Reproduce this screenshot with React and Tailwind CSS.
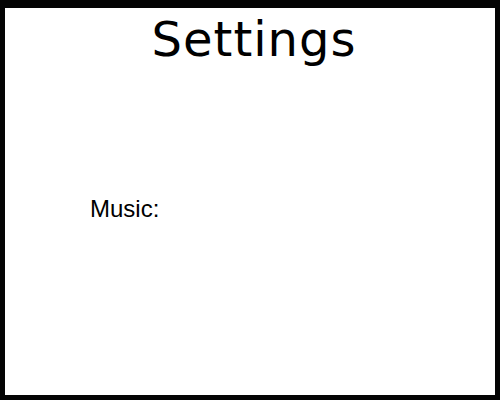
export default function App() {
  return (
    <div className="w-[500px] h-[400px] bg-[#040404] pt-[8px] pl-[5px]">
      <div className="w-[490px] h-[387px] bg-white relative">
        <h1 className="text-center text-[48px] leading-none tracking-[1px] pt-[7px] pl-[8px] text-black font-['DejaVu_Sans',sans-serif]">
          Settings
        </h1>
        <div className="mt-[134px] ml-[85px] text-[24px] leading-none text-black font-['Liberation_Sans',Arial,sans-serif]">
          Music:
        </div>
      </div>
    </div>
  );
}
